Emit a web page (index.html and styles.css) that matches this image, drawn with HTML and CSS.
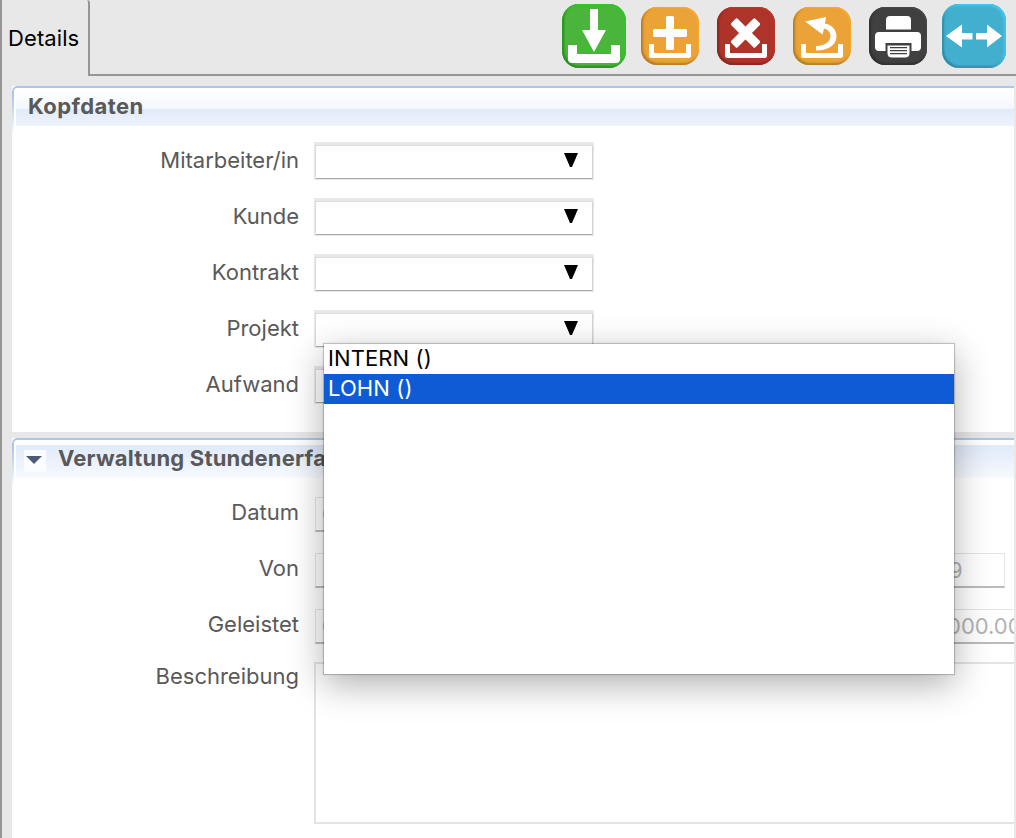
FILE: index.html
```
<!DOCTYPE html>
<html lang="de">
<head>
<meta charset="utf-8">
<title>Details</title>
<link rel="stylesheet" href="styles.css">
</head>
<body>
<div class="window">
  <header class="topbar">
    <div class="tab">Details</div>
    <nav class="toolbar">
      <svg class="tool large green" viewBox="0 0 64 64"><path d="M28 5h8v21h8L32 48 20 26h8z"/><path d="M6 41h9v9h34v-9h9v14q0 4-4 4H10q-4 0-4-4z"/></svg>
      <svg class="tool orange" viewBox="0 0 58 58"><rect x="25" y="9" width="8" height="34" rx="1.5"/><rect x="12" y="22" width="34" height="8" rx="1.5"/><path class="tray" d="M10.500 37v11.500h37V37"/></svg>
      <svg class="tool red" viewBox="0 0 58 58"><g transform="rotate(45 28.500 26)"><rect x="24" y="9" width="9" height="34" rx="1.500"/><rect x="11.500" y="21.500" width="34" height="9" rx="1.500"/></g><path class="tray" d="M10.500 37v11.500h37V37"/></svg>
      <svg class="tool orange" viewBox="0 0 58 58"><path d="M12 14.500L33 10l-1 6.500C40 18 43.500 24 43.500 29 43.500 37 37 43.500 23 43.500V39C33 38.500 37.500 34 37.500 29 37.500 25.500 35 22.500 31 21.500L29.500 27.500z"/><path class="tray" d="M10.500 37v11.500h37V37"/></svg>
      <svg class="tool dark" viewBox="0 0 58 58"><path d="M17 22.500V13q0-4 4-4h17q4 0 4 4v9.500z"/><path d="M6 29q0-4 4-4h38q4 0 4 4v11q0 4-4 4h-5.500v-8h-26v8H10q-4 0-4-4z"/><path d="M18.500 38.500h22V46q0 4.500-4.500 4.500H23q-4.500 0-4.500-4.500z"/><path class="lines" d="M21 40.700h17M21 43.700h17M21 46.700h17"/></svg>
      <svg class="tool large blue" viewBox="0 0 64 64"><path d="M4 32l16-11.500V29h10.500v6.500H20v8zM60 32L45 20.500V29H34v6.500h11v8z"/></svg>
    </nav>
  </header>
  <main class="content">
    <section class="panel head-data">
      <h2 class="panel-title">Kopfdaten</h2>
      <div class="form">
        <div class="row"><label>Mitarbeiter/in</label><div class="select"><i class="arrow"></i></div></div>
        <div class="row"><label>Kunde</label><div class="select"><i class="arrow"></i></div></div>
        <div class="row"><label>Kontrakt</label><div class="select"><i class="arrow"></i></div></div>
        <div class="row"><label>Projekt</label><div class="select"><i class="arrow"></i></div></div>
        <div class="row"><label>Aufwand</label><div class="select"><i class="arrow"></i></div></div>
      </div>
    </section>
    <section class="panel hours">
      <h2 class="panel-title collapsible"><span class="toggle"><i class="caret"></i></span>Verwaltung Stundenerfassung</h2>
      <div class="form">
        <div class="row"><label>Datum</label><div class="input">0</div></div>
        <div class="row"><label>Von</label><div class="input"></div><div class="input until">9</div></div>
        <div class="row"><label>Geleistet</label><div class="input">0</div><div class="input amount">000.00</div></div>
        <div class="row tall"><label>Beschreibung</label><div class="textarea"></div></div>
      </div>
    </section>
  </main>
  <div class="popup">
    <div class="option">INTERN ()</div>
    <div class="option selected">LOHN ()</div>
  </div>
</div>
</body>
</html>
```

FILE: styles.css
```
* { box-sizing: border-box; }
body { margin: 0; background: #e8e8e8; font-family: Inter, "Noto Sans", sans-serif; font-size: 22px; color: #595959; }
.window { position: relative; width: 1016px; height: 838px; overflow: hidden; border-left: 2px solid #969696; display: flex; flex-direction: column; }
.topbar { height: 76px; flex: none; display: flex; }
.tab { width: 88px; border-right: 2px solid #969696; border-top-right-radius: 3px; padding-left: 6px; line-height: 76px; color: #000; letter-spacing: .1px; }
.toolbar { flex: 1; display: flex; justify-content: flex-end; gap: 18px; padding: 7px 10px 0 0; border-bottom: 2px solid #969696; }
.tool { width: 58px; height: 58px; border-radius: 16px; fill: #fff; flex: none; }
.tool.large { width: 64px; height: 64px; margin-top: -3px; border-radius: 17px; }
.green { background: #4ab53b; margin-right: -3px; box-shadow: inset -1px 1px 2px 1px #35c42c, inset 1px -1px 2px 1px #26871e; }
.orange { background: #eba236; box-shadow: inset -1px 1px 2px #ffb02f, inset 1px -1px 2px 1px #b47c2b; }
.red { background: #ae342a; box-shadow: inset -1px 1px 2px #c13830, inset 1px -1px 2px 1px #852820; }
.dark { background: #404040; box-shadow: inset -1px 1px 2px #4b4b4b, inset 1px -1px 2px 1px #303030; }
.blue { background: #43afcf; margin-left: -3px; box-shadow: inset -1px 1px 2px 1px #43c8e9, inset 1px -1px 2px 1px #32849c; }
.tray { fill: none; stroke: #fff; stroke-width: 5; stroke-linejoin: round; }
.lines { stroke: #404040; stroke-width: 1.2; }
.content { flex: 1; padding: 10px 2px 0 10px; display: flex; flex-direction: column; gap: 6px; }
.panel { background: #fff; overflow: hidden; position: relative; flex: none; }
.panel::before { content: ""; position: absolute; inset: 0 -10px auto 0; height: 48px; border-top: 2px solid #a8c8f0; border-left: 2px solid #a8c8f0; border-top-left-radius: 5px; mask-image: linear-gradient(#000 10px, transparent); }
.head-data { height: 346px; }
.hours { height: 400px; }
.panel-title { margin: 4px 0 0 4px; height: 36px; padding-left: 12px; font-size: 22px; font-weight: 700; line-height: 33px; background: linear-gradient(#fff, #f3f7fd 19px, #e1ebf8 19px, #edf3fc); white-space: nowrap; letter-spacing: .4px; }
.collapsible { margin-top: 7px; height: 33px; line-height: 27px; background: linear-gradient(#e0eaf8, #f7faff); display: flex; padding-left: 8px; gap: 12px; letter-spacing: .2px; }
.toggle { width: 22px; height: 22px; margin-top: 5px; background: #fafcff; display: flex; padding: 6px 0 0 2px; }
.caret { width: 16px; height: 8px; background: #4a5c76; clip-path: polygon(0 0, 100% 0, 50% 100%); }
.form { display: flex; flex-direction: column; gap: 18px; padding-top: 16px; }
.row { height: 38px; display: flex; align-items: flex-start; }
.row label { width: 287px; text-align: right; line-height: 36px; margin-right: 15px; flex: none; }
.select { width: 280px; height: 38px; border: solid #e8e8e8; border-width: 3px 1px 1px; padding: 8px 15px; display: flex; justify-content: flex-end; box-shadow: inset 1px 1px #dcdcdc, inset -1px 0 #d4d4d4, inset 0 -1px #aaa; }
.arrow { width: 14px; height: 14px; background: #000; clip-path: polygon(0 0, 100% 0, 57% 100%, 43% 100%); }
.input { width: 305px; height: 35px; margin: 3px 0 0 1px; border: 1px solid #e5e5e5; border-bottom: 2px solid #bbb; padding-left: 6px; color: #b3b3b3; line-height: 33px; flex: none; }
.input.until { width: 306px; margin-left: 79px; padding-left: 249px; }
.input.amount { width: 400px; margin-left: 79px; padding-left: 247px; }
.tall { height: 162px; }
.tall label { line-height: 28px; }
.textarea { flex: 1; height: 162px; border: 2px solid #e4e4e4; border-right: 0; }
.popup { position: absolute; left: 322px; top: 344px; width: 630px; height: 330px; background: #fff; color: #000; box-shadow: 0 0 1px 1px rgba(0,0,0,.2), 0 10px 34px rgba(0,0,0,.32); }
.option { height: 30px; line-height: 29px; padding-left: 4px; letter-spacing: .1px; }
.selected { background: #0f5bd6; color: #fff; }
```
